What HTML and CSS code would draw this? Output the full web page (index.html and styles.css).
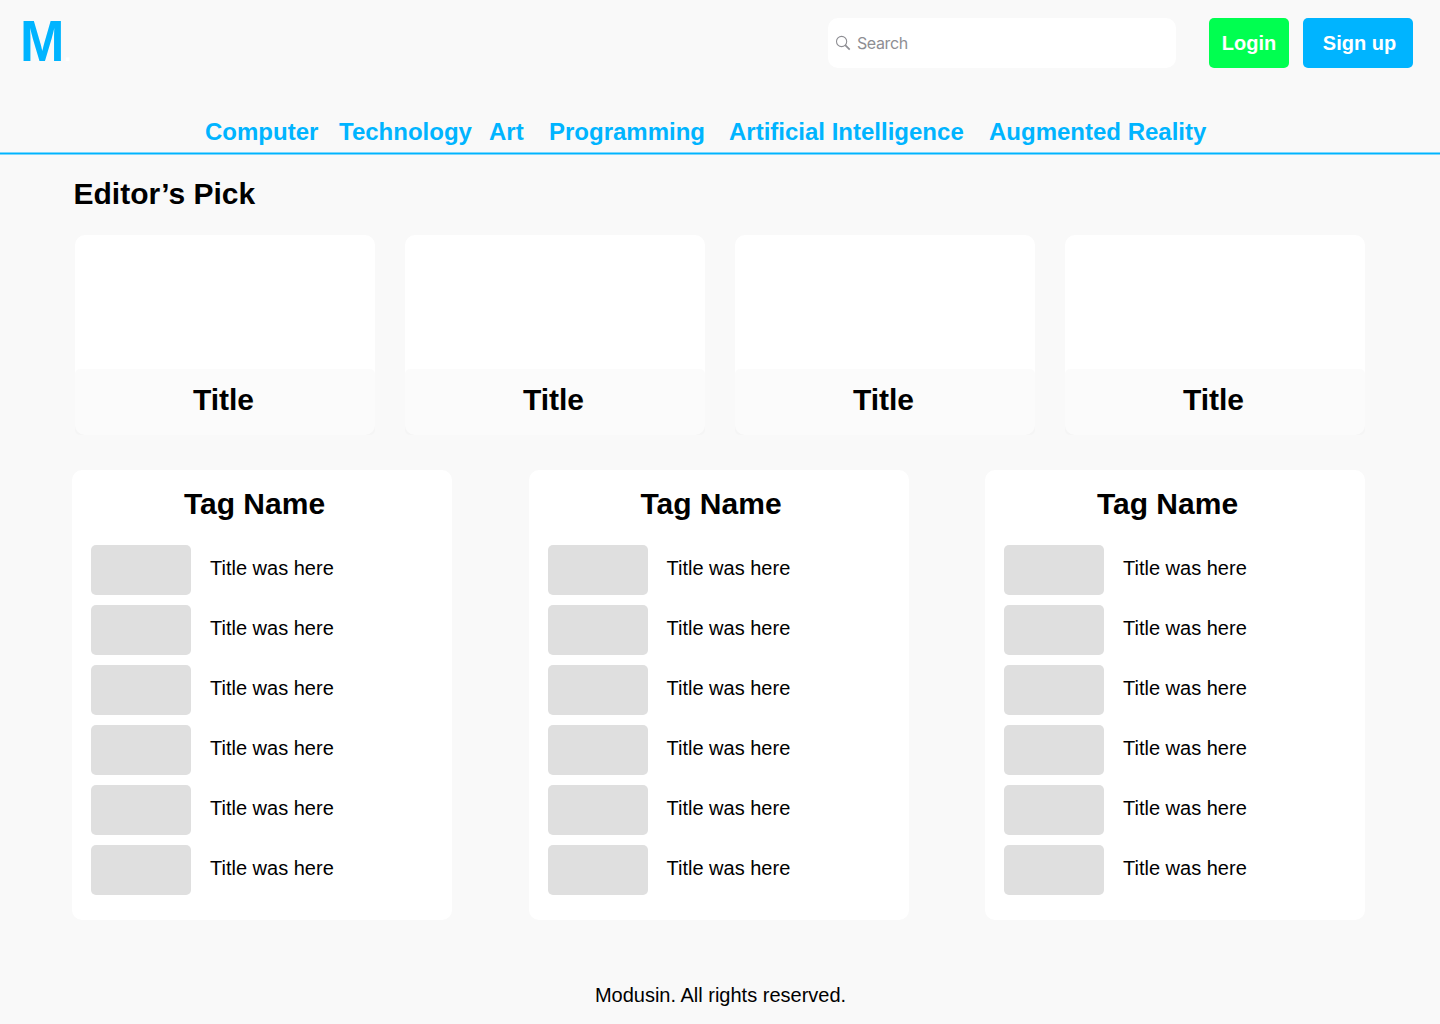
FILE: index.html
```html
<!DOCTYPE html>
<html lang="en">
<head>
<meta charset="utf-8">
<title>Modusin</title>
<link rel="stylesheet" href="styles.css">
</head>
<body>
<header class="header">
  <a class="logo"><span class="logo-letter">M</span><span class="logo-dot">.</span></a>
  <div class="search">
    <svg class="search-icon" width="16" height="16" viewBox="0 0 16 16" fill="none" stroke="#8e8e93"><circle cx="6.6" cy="6.5" r="5.1" stroke-width="1.1"/><path d="M10.2 10.2l4.5 4.4" stroke-width="1.7"/></svg>
    <span class="search-label">Search</span>
  </div>
  <a class="button button-login">Login</a>
  <a class="button button-signup">Sign up</a>
</header>
<nav class="nav">
  <a>Computer</a><a>Technology</a><a>Art</a><a>Programming</a><a>Artificial Intelligence</a><a>Augmented Reality</a>
</nav>
<main class="main">
  <h1 class="heading">Editor’s Pick</h1>
  <section class="picks">
    <article class="pick"><h2 class="pick-title">Title</h2></article>
    <article class="pick"><h2 class="pick-title">Title</h2></article>
    <article class="pick"><h2 class="pick-title">Title</h2></article>
    <article class="pick"><h2 class="pick-title">Title</h2></article>
  </section>
  <section class="tags">
    <article class="tag">
      <h2 class="tag-name">Tag Name</h2>
      <ul class="posts">
        <li class="post"><span class="thumb"></span><span class="post-title">Title was here</span></li>
        <li class="post"><span class="thumb"></span><span class="post-title">Title was here</span></li>
        <li class="post"><span class="thumb"></span><span class="post-title">Title was here</span></li>
        <li class="post"><span class="thumb"></span><span class="post-title">Title was here</span></li>
        <li class="post"><span class="thumb"></span><span class="post-title">Title was here</span></li>
        <li class="post"><span class="thumb"></span><span class="post-title">Title was here</span></li>
      </ul>
    </article>
    <article class="tag">
      <h2 class="tag-name">Tag Name</h2>
      <ul class="posts">
        <li class="post"><span class="thumb"></span><span class="post-title">Title was here</span></li>
        <li class="post"><span class="thumb"></span><span class="post-title">Title was here</span></li>
        <li class="post"><span class="thumb"></span><span class="post-title">Title was here</span></li>
        <li class="post"><span class="thumb"></span><span class="post-title">Title was here</span></li>
        <li class="post"><span class="thumb"></span><span class="post-title">Title was here</span></li>
        <li class="post"><span class="thumb"></span><span class="post-title">Title was here</span></li>
      </ul>
    </article>
    <article class="tag">
      <h2 class="tag-name">Tag Name</h2>
      <ul class="posts">
        <li class="post"><span class="thumb"></span><span class="post-title">Title was here</span></li>
        <li class="post"><span class="thumb"></span><span class="post-title">Title was here</span></li>
        <li class="post"><span class="thumb"></span><span class="post-title">Title was here</span></li>
        <li class="post"><span class="thumb"></span><span class="post-title">Title was here</span></li>
        <li class="post"><span class="thumb"></span><span class="post-title">Title was here</span></li>
        <li class="post"><span class="thumb"></span><span class="post-title">Title was here</span></li>
      </ul>
    </article>
  </section>
</main>
<footer class="footer">Modusin. All rights reserved.</footer>
</body>
</html>
```
FILE: styles.css
```css
* { box-sizing: border-box; }
body {
  margin: 0;
  width: 1440px;
  height: 1024px;
  overflow: hidden;
  background: #f9f9f9;
  color: #000;
  font-family: "Liberation Sans", Arial, sans-serif;
  font-size: 20px;
}
h1, h2, ul { margin: 0; padding: 0; }
.header {
  display: flex;
  height: 110px;
  padding: 18px 27px 0 20px;
}
.logo {
  margin-right: auto;
  color: #00b4ff;
  font-size: 58px;
  font-weight: 700;
  line-height: 46px;
  letter-spacing: -2px;
}
.logo-letter {
  display: inline-block;
  transform: scaleX(0.92);
  transform-origin: left;
}
.logo-dot { margin-left: -2px; color: #fff; font-size: 24px; }
.search {
  display: flex;
  align-items: center;
  width: 348px;
  height: 50px;
  margin-right: 33px;
  padding-left: 7px;
  border-radius: 10px;
  background: #fff;
}
.search-label {
  margin-left: 6px;
  color: #8e8e93;
  font-family: Inter, sans-serif;
  font-size: 16px;
  letter-spacing: -0.4px;
}
.button {
  height: 50px;
  border-radius: 5px;
  color: #fff;
  font-weight: 700;
  line-height: 50px;
  text-align: center;
}
.button-login { width: 80px; margin-right: 14px; background: #00ff50; }
.button-signup { width: 110px; padding-left: 3px; background: #00b4ff; }
.nav {
  display: grid;
  grid-template-columns: 134px 150px 60px 180px 260px 1fr;
  height: 45px;
  padding-left: 205px;
  background: linear-gradient(#7dd7fc 1px, #00b4ff 1px 2px, #7dd7fc 2px) bottom / 100% 3px no-repeat;
  color: #00b4ff;
  font-size: 24px;
  font-weight: 700;
  line-height: 43px;
  white-space: nowrap;
}
.main { padding: 19.5px 75px 0 72px; }
.heading { padding-left: 1.5px; font-size: 30px; line-height: 38px; }
.picks {
  display: grid;
  grid-template-columns: repeat(4, 300px);
  gap: 30px;
  margin: 22.5px 0 0 3px;
}
.pick {
  display: flex;
  align-items: flex-end;
  height: 200px;
  border-radius: 10px;
  background: #fff;
}
.pick-title {
  width: 300px;
  height: 66px;
  padding-right: 3px;
  border-radius: 5px;
  background: rgba(196, 196, 196, 0.07);
  font-size: 30px;
  line-height: 62px;
  text-align: center;
}
.tags {
  display: flex;
  justify-content: space-between;
  margin-top: 35px;
}
.tag {
  width: 380px;
  height: 450px;
  padding: 15px 19px;
  border-radius: 10px;
  background: #fff;
}
.tag-name {
  height: 60px;
  padding-right: 15px;
  font-size: 30px;
  line-height: 38px;
  text-align: center;
}
.posts {
  display: flex;
  flex-direction: column;
  gap: 10px;
  list-style: none;
}
.post { display: flex; gap: 19px; }
.thumb {
  width: 100px;
  height: 50px;
  border-radius: 5px;
  background: #dfdfdf;
}
.post-title { line-height: 47px; }
.footer { margin-top: 63px; padding-left: 1px; line-height: 24px; text-align: center; }
```
